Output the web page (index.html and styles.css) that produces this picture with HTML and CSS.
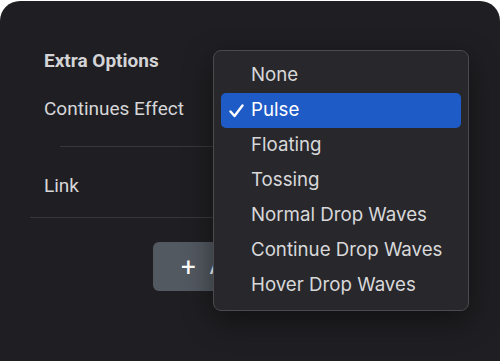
FILE: index.html
```html
<!DOCTYPE html>
<html lang="en">
<head>
  <meta charset="UTF-8" />
  <title>Extra Options</title>
  <link rel="stylesheet" href="styles.css">
</head>
<body>

  <div class="panel">
    <h3 class="section-title">Extra Options</h3>

    <div class="field-row first">
      <label>Continues Effect</label>
    </div>
    <hr class="divider inset">

    <div class="field-row link-row">
      <label>Link</label>
    </div>
    <hr class="divider">

    <div class="actions">
      <button class="add-btn"><span class="plus">+</span>Add Item</button>
    </div>

    <!-- open select menu -->
    <ul class="menu">
      <li>None</li>
      <li class="selected">
        <svg class="check" width="15" height="14" viewBox="0 0 15 14">
          <path d="M1.5 7.5 L5.5 12 L13.5 1.5" fill="none" stroke="#FFFFFF" stroke-width="2.4" stroke-linecap="round" stroke-linejoin="round"/>
        </svg>Pulse
      </li>
      <li>Floating</li>
      <li>Tossing</li>
      <li>Normal Drop Waves</li>
      <li>Continue Drop Waves</li>
      <li>Hover Drop Waves</li>
    </ul>
  </div>

</body>
</html>
```

FILE: styles.css
```css
html, body {
  margin: 0;
  background: #FFFFFF;
  height: 100%;
}

.panel {
  position: relative;
  box-sizing: border-box;
  height: 361px;
  margin-top: 1px;
  background: #1F1F23;
  border-radius: 20px 20px 0 0;
  padding: 50px 0 0 0;
  font-family: Roboto, 'Liberation Sans', sans-serif;
  color: #D9D9DB;
  overflow: hidden;
}

.section-title {
  margin: 0 0 0 44px;
  font-size: 19px;
  font-weight: 700;
  color: #D4D4D6;
  line-height: 20px;
}

.field-row {
  display: flex;
  align-items: center;
  padding-left: 44px;
  height: 38px;
}

.field-row.first {
  margin-top: 18px;
}

.field-row.link-row {
  margin-bottom: 13px;
}

label {
  font-size: 19px;
  color: #D6D6D8;
}

.divider {
  border: none;
  border-top: 1px solid #38383C;
  margin: 0 40px 0 30px;
}

.divider.inset {
  margin: 19px 40px 19px 60px;
}

.actions {
  display: flex;
  justify-content: center;
  padding-top: 24px;
}

.add-btn {
  width: 194px;
  height: 49px;
  border: none;
  border-radius: 6px;
  background: #535961;
  color: #FFFFFF;
  font-family: Roboto, 'Liberation Sans', sans-serif;
  font-size: 18px;
  font-weight: 500;
  text-align: left;
  padding-left: 28px;
}

.plus {
  font-size: 26px;
  font-weight: 400;
  vertical-align: -2px;
  margin-right: 14px;
}

.menu {
  position: absolute;
  left: 213px;
  top: 49px;
  width: 256px;
  box-sizing: border-box;
  margin: 0;
  padding: 7px 7px;
  list-style: none;
  background: #28282C;
  border: 1px solid #4A4A4F;
  border-radius: 8px;
  box-shadow: 0 10px 30px rgba(0, 0, 0, 0.45);
  font-family: Inter, 'Noto Sans', sans-serif;
  font-size: 18.7px;
  color: #D8D8DA;
}

.menu li {
  height: 35px;
  line-height: 34px;
  padding-left: 30px;
  border-radius: 5px;
  position: relative;
}

.menu li.selected {
  background: #1F5BC6;
  color: #FFFFFF;
}

.check {
  position: absolute;
  left: 8px;
  top: 11px;
}
```
